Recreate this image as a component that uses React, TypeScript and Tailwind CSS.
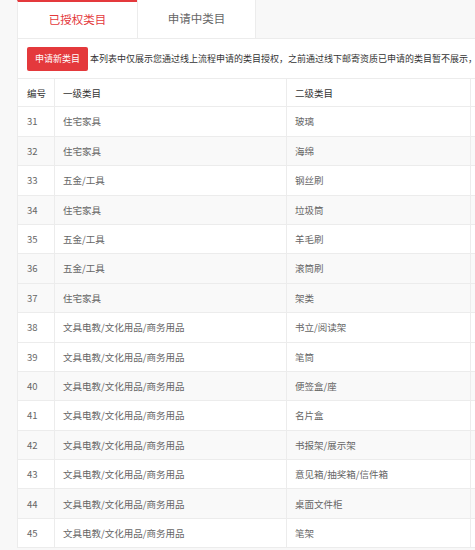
import React from "react"

const rows: { id: number; first: string; second: string; shade?: boolean }[] = [
  { id: 31, first: "住宅家具", second: "玻璃" },
  { id: 32, first: "住宅家具", second: "海绵", shade: true },
  { id: 33, first: "五金/工具", second: "钢丝刷" },
  { id: 34, first: "住宅家具", second: "垃圾筒", shade: true },
  { id: 35, first: "五金/工具", second: "羊毛刷" },
  { id: 36, first: "五金/工具", second: "滚筒刷", shade: true },
  { id: 37, first: "住宅家具", second: "架类", shade: true },
  { id: 38, first: "文具电教/文化用品/商务用品", second: "书立/阅读架" },
  { id: 39, first: "文具电教/文化用品/商务用品", second: "笔筒" },
  { id: 40, first: "文具电教/文化用品/商务用品", second: "便签盒/座", shade: true },
  { id: 41, first: "文具电教/文化用品/商务用品", second: "名片盒" },
  { id: 42, first: "文具电教/文化用品/商务用品", second: "书报架/展示架", shade: true },
  { id: 43, first: "文具电教/文化用品/商务用品", second: "意见箱/抽奖箱/信件箱" },
  { id: 44, first: "文具电教/文化用品/商务用品", second: "桌面文件柜", shade: true },
  { id: 45, first: "文具电教/文化用品/商务用品", second: "笔架" },
]

export default function App() {
  return (
    <div className="h-[550px] w-[475px] overflow-hidden bg-[#f8f8f8] pl-[17px] font-['Noto_Sans_CJK_SC','Liberation_Sans',sans-serif]">
      {/* Tabs */}
      <div className="flex h-[39px] w-[600px] border-b border-[#ececec]">
        <div className="flex w-[120px] items-center justify-center border-l border-t-2 border-l-[#ececec] border-t-[#e4393c] bg-white text-[11.5px] text-[#e4393c]">
          已授权类目
        </div>
        <div className="flex w-[119px] items-center justify-center border-x border-[#ececec] bg-white text-[11.5px] text-[#666]">
          申请中类目
        </div>
      </div>

      {/* Content */}
      <div className="w-[600px] border-l border-[#ececec] bg-white">
        <div className="flex h-[39px] items-center gap-[2px] whitespace-nowrap pl-[9px]">
          <button className="h-[24px] rounded-[2px] bg-[#e4393c] px-[8px] text-[9px] text-white">申请新类目</button>
          <span className="text-[9px] text-[#333]">
            本列表中仅展示您通过线上流程申请的类目授权，之前通过线下邮寄资质已申请的类目暂不展示，但仍可正常使用
          </span>
        </div>

        <div className="text-[9.5px] text-[#666]">
          <div className="grid h-[29.4px] grid-cols-[37px_232px_184px_1fr] border-y border-[#ececec] text-[#333]">
            <div className="flex items-center border-r border-[#ececec] pl-[9px]">编号</div>
            <div className="flex items-center border-r border-[#ececec] pl-[8px]">一级类目</div>
            <div className="flex items-center border-r border-[#ececec] pl-[8px]">二级类目</div>
            <div />
          </div>
          {rows.map((r) => (
            <div
              key={r.id}
              className={`grid h-[29.4px] grid-cols-[37px_232px_184px_1fr] border-b border-[#ececec] ${r.shade ? "bg-[#f9f9f9]" : "bg-white"}`}
            >
              <div className="flex items-center border-r border-[#ececec] pl-[9px]">{r.id}</div>
              <div className="flex items-center border-r border-[#ececec] pl-[8px]">{r.first}</div>
              <div className="flex items-center border-r border-[#ececec] pl-[8px]">{r.second}</div>
              <div />
            </div>
          ))}
        </div>
      </div>
    </div>
  )
}
